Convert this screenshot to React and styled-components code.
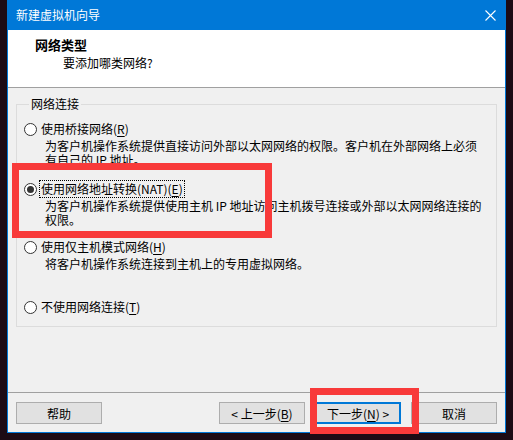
import React from 'react';
import styled, { createGlobalStyle } from 'styled-components';

const GlobalStyle = createGlobalStyle`
  html, body {
    margin: 0;
    padding: 0;
    background: #1c0b15;
  }
  body {
    font-family: "Noto Sans CJK SC", "Microsoft YaHei", sans-serif;
    font-size: 12px;
    color: #000;
  }
  * {
    box-sizing: border-box;
  }
`;

const Screen = styled.div`
  position: relative;
  width: 513px;
  height: 440px;
  padding: 0 7px;
  background: #1c0b15;
  overflow: hidden;
`;

const Window = styled.div`
  width: 499px;
  display: flex;
  flex-direction: column;
  background: #f0f0f0;
  border: 1px solid #0078d7;
  border-top: none;
`;

const TitleBar = styled.div`
  height: 30px;
  display: flex;
  align-items: center;
  justify-content: space-between;
  padding: 0 9px 0 8px;
  background: #0078d7;
  color: #fff;
  line-height: 16px;
`;

const Header = styled.div`
  height: 58px;
  padding: 7px 0 0 27px;
  background: #fff;
  border-bottom: 1px solid #a0a0a0;
`;

const HeaderTitle = styled.div`
  font-size: 13px;
  font-weight: bold;
  line-height: 16px;
`;

const HeaderSub = styled.div`
  margin: 3px 0 0 28px;
  line-height: 14px;
`;

const Body = styled.div`
  height: 304px;
  padding: 9px 8px 0;
`;

const Group = styled.fieldset`
  margin: 0;
  min-width: 0;
  padding: 10px 0 11px 7px;
  border: 1px solid #dcdcdc;
`;

const Legend = styled.legend`
  margin-left: 5px;
  padding: 0 2px;
  line-height: 14px;
`;

const Option = styled.div`
  height: ${({ $h }) => ($h ? `${$h}px` : 'auto')};
`;

const RadioRow = styled.div`
  display: flex;
  align-items: center;
  height: 16px;
`;

const Radio = styled.span`
  width: 13px;
  height: 13px;
  border-radius: 50%;
  border: 1px solid #333;
  background: #fff;
  display: grid;
  place-items: center;

  &::after {
    content: '';
    width: 7px;
    height: 7px;
    border-radius: 50%;
    background: ${({ $checked }) => ($checked ? '#333' : 'transparent')};
  }
`;

const Label = styled.span`
  margin-left: 2px;
  padding: 0 1px;
  line-height: 16px;
  white-space: nowrap;
  border: 1px dotted ${({ $focused }) => ($focused ? '#000' : 'transparent')};

  u {
    text-decoration-thickness: 1px;
    text-underline-offset: 2px;
  }
`;

const Desc = styled.div`
  margin: 2px 0 0 21px;
  line-height: 14px;
  white-space: nowrap;
`;

const Footer = styled.div`
  display: flex;
  gap: 10px;
  padding: 9px 8px 8px;
  border-top: 1px solid #a0a0a0;
`;

const Button = styled.button`
  width: 86px;
  height: 22px;
  padding: 0;
  margin-left: ${({ $push }) => ($push ? 'auto' : '0')};
  font-family: inherit;
  font-size: 12px;
  color: #000;
  background: #e1e1e1;
  border: ${({ $default }) => ($default ? '2px solid #0078d7' : '1px solid #adadad')};

  u {
    text-decoration-thickness: 1px;
    text-underline-offset: 2px;
  }
`;

const Highlight = styled.div`
  position: absolute;
  left: ${({ $x }) => $x}px;
  top: ${({ $y }) => $y}px;
  width: ${({ $w }) => $w}px;
  height: ${({ $h }) => $h}px;
  border: 7px solid #f83a3a;
  pointer-events: none;
`;

const CloseIcon = () => (
  <svg width="11" height="11" viewBox="0 0 11 11">
    <path d="M0.5 0.5 L10.5 10.5 M10.5 0.5 L0.5 10.5" stroke="#fff" strokeWidth="1.1" />
  </svg>
);

const options = [
  {
    label: <>使用桥接网络(<u>R</u>)</>,
    lines: ['为客户机操作系统提供直接访问外部以太网网络的权限。客户机在外部网络上必须', '有自己的 IP 地址。'],
    height: 60,
  },
  {
    label: <>使用网络地址转换(NAT)(<u>E</u>)</>,
    lines: ['为客户机操作系统提供使用主机 IP 地址访问主机拨号连接或外部以太网网络连接的', '权限。'],
    height: 58,
    checked: true,
  },
  {
    label: <>使用仅主机模式网络(<u>H</u>)</>,
    lines: ['将客户机操作系统连接到主机上的专用虚拟网络。'],
    height: 60,
  },
  {
    label: <>不使用网络连接(<u>T</u>)</>,
    lines: [],
  },
];

export default function App() {
  return (
    <Screen>
      <GlobalStyle />
      <Window>
        <TitleBar>
          <span>新建虚拟机向导</span>
          <CloseIcon />
        </TitleBar>
        <Header>
          <HeaderTitle>网络类型</HeaderTitle>
          <HeaderSub>要添加哪类网络?</HeaderSub>
        </Header>
        <Body>
          <Group>
            <Legend>网络连接</Legend>
            {options.map((o, i) => (
              <Option key={i} $h={o.height}>
                <RadioRow>
                  <Radio $checked={o.checked} />
                  <Label $focused={o.checked}>{o.label}</Label>
                </RadioRow>
                {o.lines.length > 0 && (
                  <Desc>
                    {o.lines.map((l, j) => (
                      <React.Fragment key={j}>
                        {j > 0 && <br />}
                        {l}
                      </React.Fragment>
                    ))}
                  </Desc>
                )}
              </Option>
            ))}
          </Group>
        </Body>
        <Footer>
          <Button>帮助</Button>
          <Button $push>&lt; 上一步(<u>B</u>)</Button>
          <Button $default>下一步(<u>N</u>) &gt;</Button>
          <Button>取消</Button>
        </Footer>
      </Window>
      <Highlight $x={12} $y={163} $w={260} $h={75} />
      <Highlight $x={310} $y={388} $w={109} $h={46} />
    </Screen>
  );
}
